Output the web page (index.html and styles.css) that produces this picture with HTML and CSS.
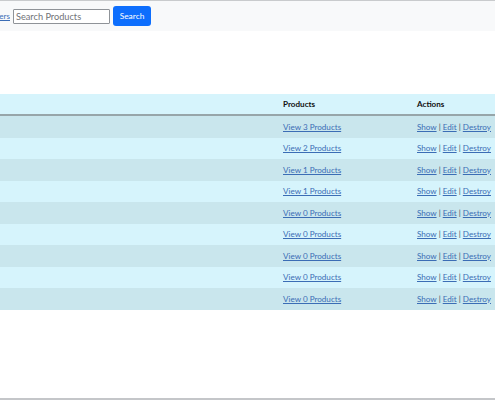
FILE: index.html
```html
<!DOCTYPE html>
<html>
<head>
<meta charset="utf-8">
<link rel="stylesheet" href="styles.css">
</head>
<body>
<div class="frame">
  <nav class="navbar">
    <a class="nav-link" href="#"><span>Suppliers</span></a>
    <form class="search">
      <input class="search-input" type="text" placeholder="Search Products">
      <button class="search-btn" type="button">Search</button>
    </form>
  </nav>
  <main class="content">
    <table class="table">
      <thead>
        <tr><th class="c1"></th><th class="c2">Products</th><th class="c3">Actions</th></tr>
      </thead>
      <tbody>
        <tr><td></td><td><a href="#">View 3 Products</a></td><td><a href="#">Show</a> | <a href="#">Edit</a> | <a href="#">Destroy</a></td></tr>
        <tr><td></td><td><a href="#">View 2 Products</a></td><td><a href="#">Show</a> | <a href="#">Edit</a> | <a href="#">Destroy</a></td></tr>
        <tr><td></td><td><a href="#">View 1 Products</a></td><td><a href="#">Show</a> | <a href="#">Edit</a> | <a href="#">Destroy</a></td></tr>
        <tr><td></td><td><a href="#">View 1 Products</a></td><td><a href="#">Show</a> | <a href="#">Edit</a> | <a href="#">Destroy</a></td></tr>
        <tr><td></td><td><a href="#">View 0 Products</a></td><td><a href="#">Show</a> | <a href="#">Edit</a> | <a href="#">Destroy</a></td></tr>
        <tr><td></td><td><a href="#">View 0 Products</a></td><td><a href="#">Show</a> | <a href="#">Edit</a> | <a href="#">Destroy</a></td></tr>
        <tr><td></td><td><a href="#">View 0 Products</a></td><td><a href="#">Show</a> | <a href="#">Edit</a> | <a href="#">Destroy</a></td></tr>
        <tr><td></td><td><a href="#">View 0 Products</a></td><td><a href="#">Show</a> | <a href="#">Edit</a> | <a href="#">Destroy</a></td></tr>
        <tr><td></td><td><a href="#">View 0 Products</a></td><td><a href="#">Show</a> | <a href="#">Edit</a> | <a href="#">Destroy</a></td></tr>
      </tbody>
    </table>
  </main>
</div>
</body>
</html>
```

FILE: styles.css
```css
html, body {
  margin: 0;
  padding: 0;
  background: #fff;
  overflow: hidden;
}
body {
  font-family: Lato, "Liberation Sans", sans-serif;
  font-size: 8.1px;
  color: #212529;
}
.frame {
  height: 397px;
  border-top: 1px solid #c9cbcd;
  border-bottom: 2px solid #c4c6c9;
  overflow: hidden;
  width: 495px;
}
.navbar {
  height: 30px;
  background: #f8f9fa;
  display: flex;
  align-items: center;
  gap: 3px;
}
.nav-link {
  width: 10px;
  overflow: hidden;
  display: flex;
  justify-content: flex-end;
  white-space: nowrap;
  color: #3b6db5;
  text-decoration: underline;
  font-size: 8.1px;
}
.search {
  display: flex;
  align-items: center;
  gap: 3px;
  margin: 0;
}
.search-input {
  box-sizing: border-box;
  width: 97px;
  height: 15px;
  border: 1px solid #8f9398;
  border-radius: 1px;
  padding: 0 2px;
  font-family: inherit;
  font-size: 9.2px;
  color: #212529;
  background: #fff;
}
.search-input::placeholder {
  color: #707377;
}
.search-btn {
  box-sizing: border-box;
  width: 38px;
  height: 20px;
  border: none;
  border-radius: 3px;
  background: #0d6efd;
  color: #fff;
  font-family: inherit;
  font-size: 8.4px;
  padding: 0;
}
.content {
  padding-top: 63px;
}
.table {
  border-collapse: collapse;
  width: 510px;
  table-layout: fixed;
}
.table th, .table td {
  padding: 0 4px;
  height: 21.5px;
  text-align: left;
  vertical-align: middle;
  white-space: nowrap;
  overflow: visible;
}
.c1 { width: 271px; }
.c2 { width: 126px; }
.c3 { width: 97px; }
.table thead th {
  height: 20px;
  background: #d6f4fc;
  font-weight: 700;
  color: #111;
  border-bottom: 2px solid #97a5a9;
}
.table tbody tr:nth-child(odd) td {
  background: #c9e6ed;
}
.table tbody tr:nth-child(even) td {
  background: #d6f4fc;
}
.table a {
  color: #3b6db5;
  text-decoration: underline;
}
.table td {
  color: #445;
}
```
